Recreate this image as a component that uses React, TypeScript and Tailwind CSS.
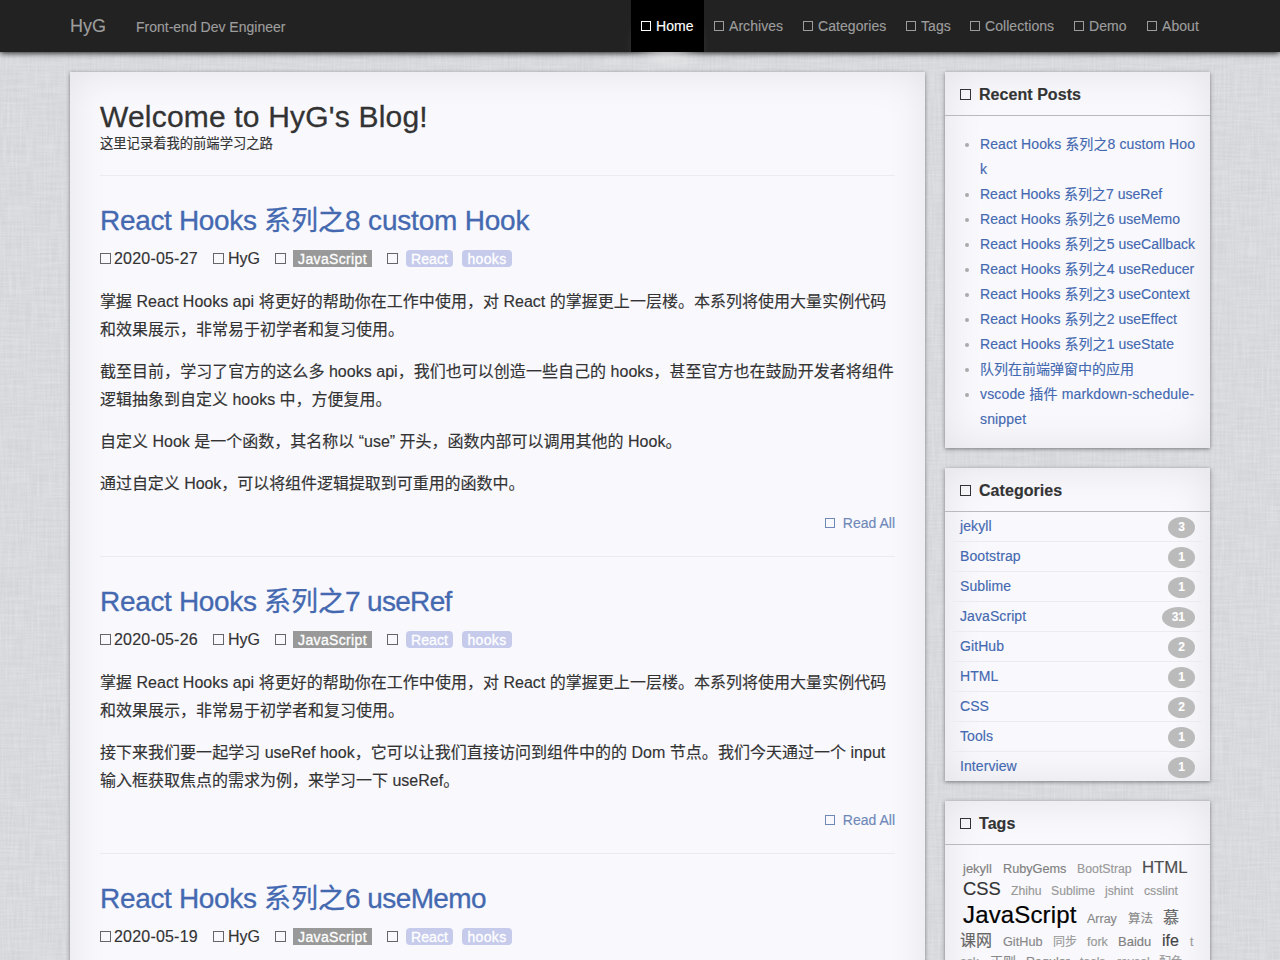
import React from 'react';

const FONT = 'font-["Liberation_Sans","Noto_Sans_CJK_SC",sans-serif]';
const PANEL =
  'bg-[#f8f8fd] shadow-[0_1px_4px_rgba(0,0,0,0.45),inset_0_0_40px_rgba(0,0,0,0.09)]';

function Box({ className }: { className: string }) {
  return <span className={`inline-block shrink-0 border ${className}`} />;
}

function Linen() {
  return (
    <svg className="absolute inset-0 -z-10 h-full w-full" aria-hidden="true">
      <filter id="warp" x="0" y="0" width="100%" height="100%">
        <feTurbulence type="fractalNoise" baseFrequency="0.5 0.03" numOctaves={2} seed={4} />
        <feColorMatrix values="0 0 0 0 1  0 0 0 0 1  0 0 0 0 1  1 0 0 0 -0.3" />
      </filter>
      <filter id="weft" x="0" y="0" width="100%" height="100%">
        <feTurbulence type="fractalNoise" baseFrequency="0.03 0.5" numOctaves={2} seed={9} />
        <feColorMatrix values="0 0 0 0 1  0 0 0 0 1  0 0 0 0 1  1 0 0 0 -0.3" />
      </filter>
      <rect width="100%" height="100%" fill="#d2d4d8" />
      <rect width="100%" height="100%" filter="url(#warp)" opacity="0.34" />
      <rect width="100%" height="100%" filter="url(#weft)" opacity="0.34" />
    </svg>
  );
}

const NAV = [
  { label: 'Home', width: 'w-[73px]', active: true },
  { label: 'Archives', width: 'w-[89px]' },
  { label: 'Categories', width: 'w-[103px]' },
  { label: 'Tags', width: 'w-16' },
  { label: 'Collections', width: 'w-[104px]' },
  { label: 'Demo', width: 'w-[73px]' },
  { label: 'About', width: 'w-[73px]' },
];

function Header() {
  return (
    <header className="relative z-10 h-[52px] bg-[#222] shadow-[0_1px_6px_rgba(0,0,0,0.9)]">
      <div className="mx-auto flex h-full w-[1140px] text-[#9d9d9d]">
        <a className="w-[66px] text-lg leading-[52px]">HyG</a>
        <span className="text-sm leading-[54px]">Front-end Dev Engineer</span>
        <nav className="ml-auto flex whitespace-nowrap text-sm leading-[52px]">
          {NAV.map((n) => (
            <a
              key={n.label}
              className={`flex items-center gap-[5px] pl-2.5 tracking-[0.06px] ${n.width} ${
                n.active ? 'bg-black text-white shadow-[0_18px_20px_-16px_rgba(255,255,255,1)]' : ''
              }`}
            >
              <Box className="h-2.5 w-2.5 border-current" />
              {n.label}
            </a>
          ))}
        </nav>
      </div>
    </header>
  );
}

type Line = [text: string, tracking: string];
type PostData = { no: string; name: string; nameStyle: string; date: string; body: Line[][] };

const INTRO: Line[] = [
  [
    '掌握 React Hooks api 将更好的帮助你在工作中使用，对 React 的掌握更上一层楼。本系列将使用大量实例代码',
    'tracking-[0.02px]',
  ],
  ['和效果展示，非常易于初学者和复习使用。', ''],
];

const POSTS: PostData[] = [
  {
    no: '8',
    name: 'custom Hook',
    nameStyle: 'tracking-[-0.2px]',
    date: '2020-05-27',
    body: [
      INTRO,
      [
        [
          '截至目前，学习了官方的这么多 hooks api，我们也可以创造一些自己的 hooks，甚至官方也在鼓励开发者将组件',
          'tracking-[0.03px]',
        ],
        ['逻辑抽象到自定义 hooks 中，方便复用。', ''],
      ],
      [['自定义 Hook 是一个函数，其名称以 “use” 开头，函数内部可以调用其他的 Hook。', '']],
      [['通过自定义 Hook，可以将组件逻辑提取到可重用的函数中。', 'tracking-[-0.05px]']],
    ],
  },
  {
    no: '7',
    name: 'useRef',
    nameStyle: 'tracking-[-0.7px]',
    date: '2020-05-26',
    body: [
      INTRO,
      [
        [
          '接下来我们要一起学习 useRef hook，它可以让我们直接访问到组件中的的 Dom 节点。我们今天通过一个 input',
          'tracking-[0.02px]',
        ],
        ['输入框获取焦点的需求为例，来学习一下 useRef。', ''],
      ],
    ],
  },
  { no: '6', name: 'useMemo', nameStyle: 'tracking-[-0.6px]', date: '2020-05-19', body: [] },
];

function Post({ no, name, nameStyle, date, body }: PostData) {
  return (
    <article className="whitespace-nowrap border-b border-[#ececf0] pt-[25px] pb-[23px]">
      <h2 className="h-10 text-[28px] leading-10 text-[#4469b0] [-webkit-text-stroke:0.3px]">
        <span className="tracking-[-0.33px]">React Hooks </span>
        <span className="text-[27px]">系列之</span>
        <span className={nameStyle}>
          {no} {name}
        </span>
      </h2>
      <div className="mt-1 mb-[15px] flex h-[27px] items-center text-base text-[#333]">
        <Box className="mr-[3px] h-[11px] w-[11px] border-[#666]" />
        <span className="w-[99px] tracking-[0.2px]">{date}</span>
        <Box className="mr-1 h-[11px] w-[11px] border-[#666]" />
        <span className="w-[47px]">HyG</span>
        <Box className="mr-[7px] h-[11px] w-[11px] border-[#666]" />
        <a className="mr-[15px] h-[17px] w-[79px] bg-[#999] text-center text-sm leading-[18px] tracking-[0.35px] text-white [-webkit-text-stroke:0.3px]">
          JavaScript
        </a>
        <Box className="mr-2 h-[11px] w-[11px] border-[#666]" />
        <a className="mr-[9px] h-[17px] w-[47px] rounded bg-[#c6cbec] text-center text-sm leading-[18px] tracking-[0.1px] text-white [-webkit-text-stroke:0.3px]">
          React
        </a>
        <a className="h-[17px] w-[50px] rounded bg-[#c6cbec] text-center text-sm leading-[18px] tracking-[0.35px] text-white [-webkit-text-stroke:0.3px]">
          hooks
        </a>
      </div>
      {body.map((lines, i) => (
        <p key={i} className="mb-3.5 text-base leading-7 text-[#333]">
          {lines.map(([text, tracking]) => (
            <span key={text} className={`block pt-px leading-[27px] ${tracking}`}>
              {text}
            </span>
          ))}
        </p>
      ))}
      {body.length > 0 && (
        <a className="mt-4 flex h-5 items-center justify-end gap-2 text-sm text-[#6f88b8]">
          <Box className="h-2.5 w-2.5 border-current" />
          Read All
        </a>
      )}
    </article>
  );
}

function Panel({ title, children, className = '' }: { title: string; children: React.ReactNode; className?: string }) {
  return (
    <section className={`${PANEL} ${className}`}>
      <h3 className="flex h-11 items-center gap-2 border-b border-[#b9b9c0] px-[15px] pt-[2px] text-base font-bold tracking-[0.05px] text-[#333]">
        <Box className="h-[11px] w-[11px] border-current" />
        {title}
      </h3>
      {children}
    </section>
  );
}

const RECENT: [lines: string[], tracking: string][] = [
  [['React Hooks 系列之8 custom Hoo', 'k'], 'tracking-[0.1px]'],
  [['React Hooks 系列之7 useRef'], ''],
  [['React Hooks 系列之6 useMemo'], 'tracking-[0.04px]'],
  [['React Hooks 系列之5 useCallback'], 'tracking-[0.04px]'],
  [['React Hooks 系列之4 useReducer'], 'tracking-[0.04px]'],
  [['React Hooks 系列之3 useContext'], 'tracking-[0.04px]'],
  [['React Hooks 系列之2 useEffect'], 'tracking-[0.04px]'],
  [['React Hooks 系列之1 useState'], 'tracking-[0.04px]'],
  [['队列在前端弹窗中的应用'], ''],
  [['vscode 插件 markdown-schedule-', 'snippet'], 'tracking-[0.15px]'],
];

const CATEGORIES: [string, number][] = [
  ['jekyll', 3],
  ['Bootstrap', 1],
  ['Sublime', 1],
  ['JavaScript', 31],
  ['GitHub', 2],
  ['HTML', 1],
  ['CSS', 2],
  ['Tools', 1],
  ['Interview', 1],
];

const TAG_ROWS: { row: string; tags: [string, string][] }[] = [
  {
    row: 'h-[21px] pl-[3px]',
    tags: [
      ['jekyll', 'w-10 text-[13px] text-[#808080]'],
      ['RubyGems', 'w-[74px] text-[12.7px] text-[#808080]'],
      ['BootStrap', 'w-[65px] text-[12.3px] text-[#999]'],
      ['HTML', 'text-[16.8px] text-[#4d4d4d]'],
    ],
  },
  {
    row: 'h-[26px] pl-[3px]',
    tags: [
      ['CSS', 'w-12 text-[18.4px] text-[#333]'],
      ['Zhihu', 'w-10 text-[12.2px] text-[#999]'],
      ['Sublime', 'w-[54px] text-[12.2px] text-[#999]'],
      ['jshint', 'w-[39px] text-[12.2px] text-[#999]'],
      ['csslint', 'text-[12.2px] text-[#999]'],
    ],
  },
  {
    row: 'h-[26px] pl-[3px]',
    tags: [
      ['JavaScript', 'w-[124px] text-2xl text-black tracking-[0.15px] [-webkit-text-stroke:0.2px]'],
      ['Array', 'w-[41px] text-[12.5px] text-[#888]'],
      ['算法', 'w-[35px] text-[12.5px] text-[#888]'],
      ['慕', 'text-base text-[#666]'],
    ],
  },
  {
    row: 'h-[21px]',
    tags: [
      ['课网', 'w-[43px] text-base text-[#666]'],
      ['GitHub', 'w-[50px] text-[12.7px] text-[#888]'],
      ['同步', 'w-[34px] text-xs text-[#999]'],
      ['fork', 'w-[31px] text-[12.5px] text-[#999]'],
      ['Baidu', 'w-11 text-[13px] text-[#808080]'],
      ['ife', 'w-7 text-base text-[#444]'],
      ['t', 'text-xs text-[#999]'],
    ],
  },
  {
    row: 'h-[22px]',
    tags: [
      ['ask', 'w-[30px] text-xs text-[#999]'],
      ['正则', 'w-9 text-[13px] text-[#888]'],
      ['Regular', 'w-[54px] text-[12.5px] text-[#888]'],
      ['tools', 'w-[37px] text-xs text-[#999]'],
      ['reveal', 'w-[42px] text-xs text-[#999]'],
      ['配色', 'text-xs text-[#999]'],
    ],
  },
];

export default function App() {
  return (
    <div className={`relative isolate h-[960px] w-[1280px] overflow-hidden [-webkit-text-stroke:0.15px] ${FONT}`}>
      <Linen />
      <Header />
      <div className="mx-auto mt-5 flex w-[1140px] items-start gap-5">
        <main className={`h-[1100px] w-[855px] px-[30px] ${PANEL}`}>
          <div className="h-[104px] border-b border-[#ececf0] pt-[27px] text-[#333]">
            <h1 className="text-[30px] leading-9 tracking-[0.19px] [-webkit-text-stroke:0.3px]">
              Welcome to HyG's Blog!
            </h1>
            <p className="text-[13.3px] leading-[18px]">这里记录着我的前端学习之路</p>
          </div>
          {POSTS.map((p) => (
            <Post key={p.no} {...p} />
          ))}
        </main>
        <aside className="flex w-[265px] shrink-0 flex-col gap-5 whitespace-nowrap">
          <Panel title="Recent Posts" className="h-[376px]">
            <ul className="pt-4 pl-[35px] text-sm leading-[25px] text-[#4469b0]">
              {RECENT.map(([lines, tracking]) => (
                <li key={lines[0]} className={`relative ${tracking}`}>
                  <span className="absolute top-[11px] -left-[15px] h-1 w-1 rounded-full bg-[#aaa]" />
                  {lines.map((l) => (
                    <span key={l} className="block">
                      {l}
                    </span>
                  ))}
                </li>
              ))}
            </ul>
          </Panel>
          <Panel title="Categories" className="h-[313px]">
            {CATEGORIES.map(([name, count]) => (
              <div
                key={name}
                className="mx-2 flex h-[30px] justify-between border-b border-[#ececf0] px-[7px] text-sm leading-[29px] tracking-[0.08px] text-[#4469b0] last:border-b-0"
              >
                <a>{name}</a>
                <span className="mt-[5px] h-[21px] rounded-[50%] bg-[#bbb] px-2.5 text-xs leading-5 font-bold tracking-normal text-white">
                  {count}
                </span>
              </div>
            ))}
          </Panel>
          <Panel title="Tags" className="h-[300px]">
            <div className="px-[15px] pt-3">
              {TAG_ROWS.map(({ row, tags }, i) => (
                <div key={i} className={`flex items-baseline ${row}`}>
                  {tags.map(([name, style]) => (
                    <a key={name} className={`shrink-0 ${style} leading-[22px]`}>
                      {name}
                    </a>
                  ))}
                </div>
              ))}
            </div>
          </Panel>
        </aside>
      </div>
    </div>
  );
}
